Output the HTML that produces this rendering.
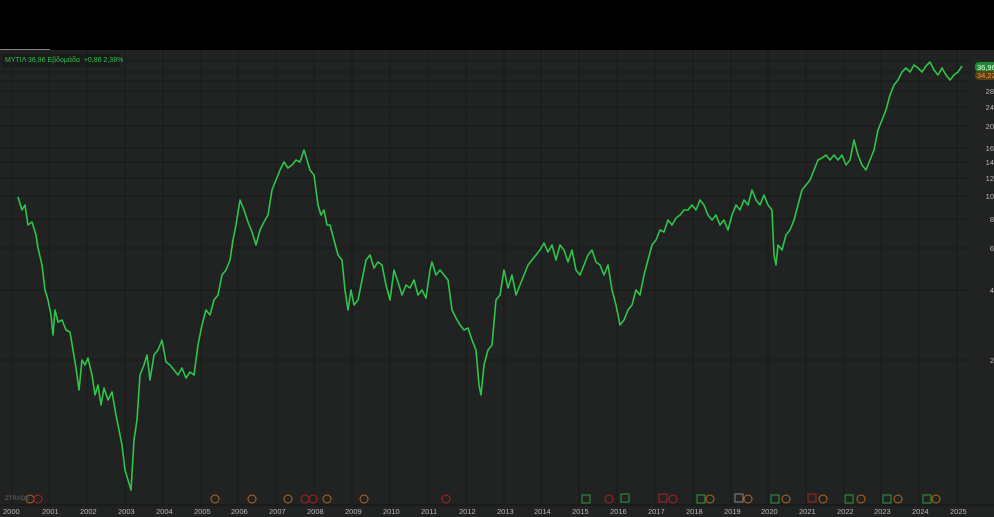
<!DOCTYPE html>
<html><head><meta charset="utf-8"><style>
body{margin:0;width:994px;height:517px;background:#000;overflow:hidden;font-family:"Liberation Sans","DejaVu Sans",sans-serif}
#c{position:absolute;left:0;top:50px;width:994px;height:467px;background:#212322}
.lg{position:absolute;left:2px;top:54px;width:118px;height:13px;background:#1a1c1b;color:#2fbf4a;font-size:7px;line-height:13px;padding-left:3px;box-sizing:border-box;white-space:nowrap}
</style></head><body>
<div id="c"></div>
<div style="position:absolute;left:0;top:49px;width:50px;height:1px;background:#888"></div>
<svg style="position:absolute;left:0;top:0" width="994" height="517">
<g stroke="#171918" stroke-width="1">
<line x1="12" y1="50" x2="12" y2="505"/><line x1="49" y1="50" x2="49" y2="505"/><line x1="87" y1="50" x2="87" y2="505"/><line x1="125" y1="50" x2="125" y2="505"/><line x1="163" y1="50" x2="163" y2="505"/><line x1="201" y1="50" x2="201" y2="505"/><line x1="238" y1="50" x2="238" y2="505"/><line x1="276" y1="50" x2="276" y2="505"/><line x1="314" y1="50" x2="314" y2="505"/><line x1="352" y1="50" x2="352" y2="505"/><line x1="390" y1="50" x2="390" y2="505"/><line x1="428" y1="50" x2="428" y2="505"/><line x1="466" y1="50" x2="466" y2="505"/><line x1="504" y1="50" x2="504" y2="505"/><line x1="541" y1="50" x2="541" y2="505"/><line x1="579" y1="50" x2="579" y2="505"/><line x1="617" y1="50" x2="617" y2="505"/><line x1="655" y1="50" x2="655" y2="505"/><line x1="693" y1="50" x2="693" y2="505"/><line x1="731" y1="50" x2="731" y2="505"/><line x1="768" y1="50" x2="768" y2="505"/><line x1="806" y1="50" x2="806" y2="505"/><line x1="844" y1="50" x2="844" y2="505"/><line x1="881" y1="50" x2="881" y2="505"/><line x1="919" y1="50" x2="919" y2="505"/><line x1="957" y1="50" x2="957" y2="505"/>
<line x1="0" y1="61" x2="970" y2="61"/><line x1="0" y1="72" x2="970" y2="72"/><line x1="0" y1="81" x2="970" y2="81"/><line x1="0" y1="91" x2="970" y2="91"/><line x1="0" y1="107" x2="970" y2="107"/><line x1="0" y1="126" x2="970" y2="126"/><line x1="0" y1="148" x2="970" y2="148"/><line x1="0" y1="162" x2="970" y2="162"/><line x1="0" y1="178" x2="970" y2="178"/><line x1="0" y1="196" x2="970" y2="196"/><line x1="0" y1="219" x2="970" y2="219"/><line x1="0" y1="248" x2="970" y2="248"/><line x1="0" y1="290" x2="970" y2="290"/><line x1="0" y1="360" x2="970" y2="360"/>
<line x1="0" y1="505" x2="994" y2="505" stroke="#141615"/>
</g>
<polyline fill="none" stroke="#2fc44a" stroke-width="1.6" stroke-linejoin="round" points="18,197 22,210 25,205 28,225 32,222 36,235 38,248 42,265 45,290 48,300 51,315 53,335 55,310 58,322 62,320 66,330 70,332 73,350 76,368 79,390 82,360 85,365 88,358 92,375 95,395 98,385 101,405 104,388 108,400 112,392 116,415 119,430 122,445 125,470 128,480 131,490 134,440 137,420 140,375 144,365 147,355 150,380 154,355 158,350 162,340 166,362 170,365 174,370 178,375 182,368 186,378 190,372 194,375 198,345 202,325 206,310 210,315 214,300 218,295 222,275 226,270 230,260 233,240 236,225 240,200 244,210 248,222 252,232 256,245 260,230 264,222 268,215 272,190 276,180 280,170 284,162 288,168 292,165 296,160 300,162 304,150 307,160 310,170 314,175 318,205 321,215 324,210 327,225 330,225 334,240 338,255 342,260 345,290 348,310 351,290 354,305 358,300 362,280 366,260 370,255 374,268 378,262 382,265 386,285 390,300 394,270 398,282 402,295 406,285 410,288 414,280 418,295 422,290 426,298 430,270 432,262 436,275 440,270 444,275 448,280 452,310 456,318 460,325 464,330 468,328 472,340 476,350 479,385 481,395 484,365 488,350 492,345 496,300 500,295 504,270 508,288 512,275 516,295 520,285 524,275 528,265 532,260 536,255 540,250 544,243 548,252 552,245 556,260 560,245 564,250 568,262 572,250 576,270 580,275 584,265 588,255 592,250 596,262 600,265 604,275 608,265 612,290 616,305 620,325 624,320 628,310 632,305 636,290 640,295 644,275 648,260 652,245 656,240 660,230 664,232 668,220 672,225 676,218 680,215 684,210 688,210 692,205 696,210 700,200 704,205 708,215 712,220 716,215 720,225 724,220 728,230 732,215 736,205 740,210 744,200 748,205 752,190 756,200 760,205 764,195 768,205 772,210 774,255 776,265 778,245 782,250 786,235 790,230 794,220 798,205 802,190 806,185 810,180 814,170 818,160 822,158 826,155 830,160 834,155 838,160 842,155 846,165 850,160 854,140 858,155 862,165 866,170 870,160 874,150 878,130 882,120 886,110 890,95 894,85 898,80 902,72 906,68 910,72 914,65 918,68 922,72 926,66 930,62 934,70 938,75 942,68 946,75 950,80 954,75 958,72 962,66"/>
<g fill="none" stroke-width="1">
<circle cx="30" cy="499" r="4" stroke="#b8651a"/><circle cx="38" cy="499" r="4" stroke="#b02020"/>
<circle cx="215" cy="499" r="4" stroke="#b8651a"/><circle cx="252" cy="499" r="4" stroke="#b8651a"/><circle cx="288" cy="499" r="4" stroke="#b8651a"/><circle cx="305" cy="499" r="4" stroke="#b02020"/><circle cx="313" cy="499" r="4" stroke="#b02020"/><circle cx="327" cy="499" r="4" stroke="#b8651a"/><circle cx="364" cy="499" r="4" stroke="#b8651a"/><circle cx="446" cy="499" r="4" stroke="#b02020"/>
<rect x="582" y="495" width="8" height="8" stroke="#2a9a3a"/><circle cx="609" cy="499" r="4" stroke="#b02020"/><rect x="621" y="494" width="8" height="8" stroke="#2a9a3a"/><rect x="659" y="494" width="8" height="8" stroke="#b02020"/><circle cx="673" cy="499" r="4" stroke="#b02020"/>
<rect x="697" y="495" width="8" height="8" stroke="#2a9a3a"/><circle cx="710" cy="499" r="4" stroke="#b8651a"/><rect x="735" y="494" width="8" height="8" stroke="#888"/><circle cx="748" cy="499" r="4" stroke="#b8651a"/>
<rect x="771" y="495" width="8" height="8" stroke="#2a9a3a"/><circle cx="786" cy="499" r="4" stroke="#b8651a"/><rect x="808" y="494" width="8" height="8" stroke="#b02020"/><circle cx="823" cy="499" r="4" stroke="#b8651a"/>
<rect x="845" y="495" width="8" height="8" stroke="#2a9a3a"/><circle cx="861" cy="499" r="4" stroke="#b8651a"/><rect x="883" y="495" width="8" height="8" stroke="#2a9a3a"/><circle cx="898" cy="499" r="4" stroke="#b8651a"/><rect x="923" y="495" width="8" height="8" stroke="#2a9a3a"/><circle cx="936" cy="499" r="4" stroke="#b8651a"/>
</g>
<text x="5" y="500" font-size="6" fill="#555" font-weight="bold">ZTRADE</text>
<g font-size="7.5" fill="#b8b8b8" font-family="Liberation Sans,sans-serif">
<text x="3" y="514">2000</text><text x="42" y="514">2001</text><text x="80" y="514">2002</text><text x="118" y="514">2003</text><text x="156" y="514">2004</text><text x="194" y="514">2005</text><text x="231" y="514">2006</text><text x="269" y="514">2007</text><text x="307" y="514">2008</text><text x="345" y="514">2009</text><text x="383" y="514">2010</text><text x="421" y="514">2011</text><text x="459" y="514">2012</text><text x="497" y="514">2013</text><text x="534" y="514">2014</text><text x="572" y="514">2015</text><text x="610" y="514">2016</text><text x="648" y="514">2017</text><text x="686" y="514">2018</text><text x="724" y="514">2019</text><text x="761" y="514">2020</text><text x="799" y="514">2021</text><text x="837" y="514">2022</text><text x="874" y="514">2023</text><text x="912" y="514">2024</text><text x="950" y="514">2025</text>
</g>
<g font-size="7.5" fill="#b8b8b8" text-anchor="end">
<text x="994" y="94">28</text><text x="994" y="110">24</text><text x="994" y="129">20</text><text x="994" y="151">16</text><text x="994" y="165">14</text><text x="994" y="181">12</text><text x="994" y="199">10</text><text x="994" y="222">8</text><text x="994" y="251">6</text><text x="994" y="293">4</text><text x="994" y="363">2</text>
</g>
<rect x="975" y="62" width="22" height="10" rx="4" fill="#1f8a34"/><text x="977" y="70" font-size="7.5" fill="#e8ffe8">36,96</text>
<rect x="975" y="71" width="22" height="9" rx="4" fill="#5a3d12"/><text x="977" y="78" font-size="7.5" fill="#d9a04a">34,22</text>
</svg>
<div class="lg">ΜΥΤΙΛ 36,96 Εβδομάδα &nbsp;+0,86 2,38%</div>
</body></html>
